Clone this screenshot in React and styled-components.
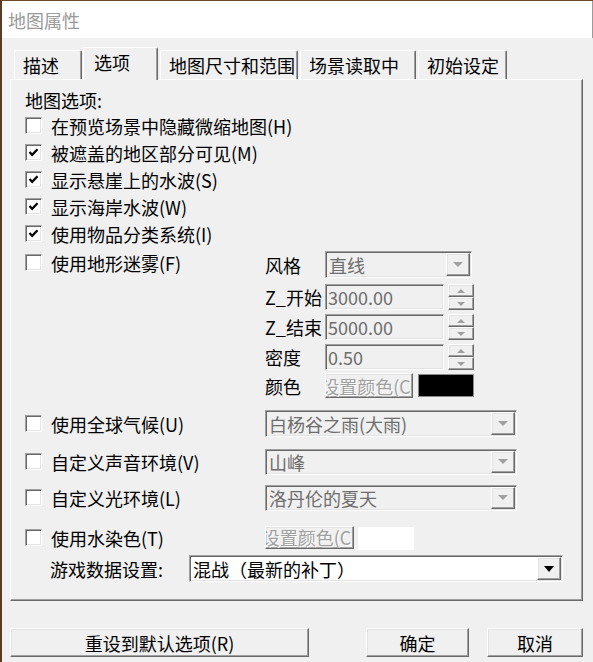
import React from "react";
import styled, { createGlobalStyle, css } from "styled-components";

const GlobalStyle = createGlobalStyle`
  html, body {
    margin: 0;
    padding: 0;
    background: #f0f0f0;
  }
  body {
    font-family: "Noto Sans CJK SC", "Noto Sans", sans-serif;
  }
  * {
    box-sizing: border-box;
  }
`;

const raised = css`
  border: 1px solid;
  border-color: #fff #696969 #696969 #fff;
  box-shadow: inset -1px -1px #a0a0a0, inset 1px 1px #e3e3e3;
`;

const sunken = css`
  border: 1px solid;
  border-color: #a0a0a0 #fff #fff #a0a0a0;
  box-shadow: inset 1px 1px #696969, inset -1px -1px #e3e3e3;
`;

const Screen = styled.div`
  width: 593px;
  height: 662px;
  overflow: hidden;
  border-left: 2px solid #5b3b22;
  border-top: 1px solid #6a4a2a;
  display: flex;
  flex-direction: column;
  font-size: 18px;
  color: #000;
`;

const TitleBar = styled.div`
  height: 37px;
  flex: none;
  background: #fff;
  border-right: 1px solid #9b9b9b;
  display: flex;
  align-items: center;
  padding-left: 6px;
  color: #9a9a9a;
  font-size: 18px;
`;

const Body = styled.div`
  flex: 1;
  background: #f0f0f0;
  padding: 9px 10px 0 8px;
  display: flex;
  flex-direction: column;
`;

const TabStrip = styled.div`
  display: flex;
  align-items: flex-end;
  height: 32px;
  margin-left: 4px;
`;

const Tab = styled.div`
  width: ${(p) => p.$w}px;
  height: ${(p) => (p.$active ? 33 : 29)}px;
  margin-right: ${(p) => p.$gap}px;
  margin-bottom: ${(p) => (p.$active ? -1 : 0)}px;
  padding: 3px 0 0 ${(p) => (p.$active ? 10 : 8)}px;
  background: #f0f0f0;
  border-top: 1px solid #fff;
  border-left: 1px solid #fff;
  border-right: 1px solid #696969;
  box-shadow: inset -1px 0 #a0a0a0;
  border-radius: 2px 2px 0 0;
  line-height: 22px;
  white-space: nowrap;
  position: relative;
  z-index: ${(p) => (p.$active ? 2 : 0)};
`;

const Panel = styled.div`
  width: 573px;
  height: 522px;
  flex: none;
  border-top: 1px solid #fff;
  border-left: 1px solid #fff;
  border-right: 1px solid #696969;
  border-bottom: 1px solid #696969;
  box-shadow: inset -1px -1px #a0a0a0;
  padding: 9px 0 0 14px;
  position: relative;
  z-index: 1;
`;

const SectionTitle = styled.div`
  height: 23px;
  line-height: 23px;
`;

const CheckRow = styled.div`
  display: flex;
  align-items: center;
  height: ${(p) => p.$h || 27}px;
  white-space: nowrap;
`;

const Box = styled.span`
  width: 17px;
  height: 17px;
  flex: none;
  margin-right: 9px;
  background: #fff;
  ${sunken};
  display: flex;
  align-items: center;
  justify-content: center;
`;

const FogBlock = styled.div`
  display: grid;
  grid-template-columns: 240px auto;
  align-items: start;
  margin-top: 4px;
`;

const FogGrid = styled.div`
  display: grid;
  grid-template-columns: 60px auto;
  grid-template-rows: 33px 30px 30px 29px 25px;
  align-items: start;
`;

const FogLabel = styled.div`
  height: ${(p) => p.$h}px;
  display: flex;
  align-items: center;
  white-space: nowrap;
`;

const SelectBox = styled.div`
  width: ${(p) => p.$w}px;
  height: ${(p) => p.$h}px;
  ${sunken};
  padding: 1px;
  display: flex;
  background: ${(p) => (p.$off ? "#f0f0f0" : "#fff")};
`;

const SelectText = styled.div`
  flex: 1;
  display: flex;
  align-items: center;
  padding-left: 2px;
  line-height: 20px;
  color: ${(p) => (p.$off ? "#6d6d6d" : "#000")};
  white-space: nowrap;
`;

const ArrowBtn = styled.div`
  width: 24px;
  flex: none;
  background: #f0f0f0;
  ${raised};
  display: flex;
  align-items: center;
  justify-content: center;
`;

const Tri = styled.span`
  width: 0;
  height: 0;
  border-left: ${(p) => (p.$small ? 4 : 5)}px solid transparent;
  border-right: ${(p) => (p.$small ? 4 : 5)}px solid transparent;
  ${(p) =>
    p.$up
      ? css`
          border-bottom: 4px solid #a0a0a0;
        `
      : css`
          border-top: ${p.$small ? 4 : p.$off ? 5 : 6}px solid ${p.$off ? "#a0a0a0" : "#000"};
        `}
`;

const SpinWrap = styled.div`
  display: flex;
  gap: 4px;
  height: 26px;
`;

const Field = styled.div`
  width: 119px;
  height: 26px;
  ${sunken};
  background: #f0f0f0;
  color: #6d6d6d;
  display: flex;
  align-items: center;
  padding-left: 2px;
  line-height: 20px;
`;

const Spinner = styled.div`
  width: 26px;
  display: flex;
  flex-direction: column;
`;

const SpinBtn = styled.div`
  flex: 1;
  ${raised};
  background: #f0f0f0;
  display: flex;
  align-items: center;
  justify-content: center;
`;

const ColorWrap = styled.div`
  display: flex;
  gap: ${(p) => p.$gap}px;
`;

const ColorBtn = styled.div`
  width: ${(p) => p.$w}px;
  height: ${(p) => p.$h}px;
  ${raised};
  background: #f0f0f0;
  overflow: hidden;
  display: flex;
  align-items: center;
  justify-content: center;
  white-space: nowrap;
  line-height: 20px;
  color: #a0a0a0;
  text-shadow: 1px 1px #fff;
`;

const Swatch = styled.div`
  width: 56px;
  height: 23px;
  margin-top: 1px;
  background: ${(p) => p.$c};
  border: ${(p) => (p.$c === "#000" ? "1px solid #8a8a8a" : "none")};
`;

const OptionRow = styled.div`
  display: grid;
  grid-template-columns: 240px auto;
  align-items: center;
  height: ${(p) => p.$h}px;
  margin-top: ${(p) => p.$mt}px;
`;

const GameRow = styled.div`
  display: flex;
  align-items: center;
  height: 27px;
  margin-top: 8px;
  padding-left: 25px;
`;

const GameLabel = styled.div`
  width: 139px;
  white-space: nowrap;
`;

const ButtonRow = styled.div`
  display: flex;
  margin-top: 27px;
`;

const Button = styled.div`
  width: ${(p) => p.$w}px;
  margin-left: ${(p) => p.$ml || 0}px;
  height: 29px;
  ${raised};
  background: #f0f0f0;
  display: flex;
  align-items: center;
  justify-content: center;
  white-space: nowrap;
`;

const Check = ({ on, label, h }) => (
  <CheckRow $h={h}>
    <Box>
      {on && (
        <svg width="13" height="13" viewBox="0 0 13 13">
          <polyline points="2.5,6 5.2,8.8 10.5,3.2" fill="none" stroke="#000" strokeWidth="2.2" />
        </svg>
      )}
    </Box>
    {label}
  </CheckRow>
);

const Select = ({ w, h, value, off }) => (
  <SelectBox $w={w} $h={h} $off={off}>
    <SelectText $off={off}>{value}</SelectText>
    <ArrowBtn>
      <Tri $off={off} />
    </ArrowBtn>
  </SelectBox>
);

const Spin = ({ value }) => (
  <SpinWrap>
    <Field>{value}</Field>
    <Spinner>
      <SpinBtn>
        <Tri $up $small />
      </SpinBtn>
      <SpinBtn>
        <Tri $off $small />
      </SpinBtn>
    </Spinner>
  </SpinWrap>
);

const ColorPick = ({ w, h, gap, color }) => (
  <ColorWrap $gap={gap}>
    <ColorBtn $w={w} $h={h}>设置颜色(C)</ColorBtn>
    <Swatch $c={color} />
  </ColorWrap>
);

const tabs = [
  { label: "描述", w: 68, gap: 1 },
  { label: "选项", w: 75, gap: 2, active: true },
  { label: "地图尺寸和范围", w: 138, gap: 2 },
  { label: "场景读取中", w: 116, gap: 2 },
  { label: "初始设定", w: 89, gap: 0 },
];

const topChecks = [
  { label: "在预览场景中隐藏微缩地图(H)", on: false },
  { label: "被遮盖的地区部分可见(M)", on: true },
  { label: "显示悬崖上的水波(S)", on: true },
  { label: "显示海岸水波(W)", on: true },
  { label: "使用物品分类系统(I)", on: true },
];

export default function App() {
  return (
    <>
      <GlobalStyle />
      <Screen>
        <TitleBar>地图属性</TitleBar>
        <Body>
          <TabStrip>
            {tabs.map((t) => (
              <Tab key={t.label} $w={t.w} $gap={t.gap} $active={t.active}>
                {t.label}
              </Tab>
            ))}
          </TabStrip>
          <Panel>
            <SectionTitle>地图选项:</SectionTitle>
            {topChecks.map((c) => (
              <Check key={c.label} on={c.on} label={c.label} />
            ))}

            <FogBlock>
              <Check h={23} label="使用地形迷雾(F)" />
              <FogGrid>
                <FogLabel $h={27}>风格</FogLabel>
                <Select w={147} h={27} value="直线" off />
                <FogLabel $h={26}>Z_开始</FogLabel>
                <Spin value="3000.00" />
                <FogLabel $h={26}>Z_结束</FogLabel>
                <Spin value="5000.00" />
                <FogLabel $h={26}>密度</FogLabel>
                <Spin value="0.50" />
                <FogLabel $h={25}>颜色</FogLabel>
                <ColorPick w={88} h={25} gap={5} color="#000" />
              </FogGrid>
            </FogBlock>

            <OptionRow $h={27} $mt={12}>
              <Check label="使用全球气候(U)" />
              <Select w={252} h={27} value="白杨谷之雨(大雨)" off />
            </OptionRow>
            <OptionRow $h={26} $mt={11}>
              <Check label="自定义声音环境(V)" />
              <Select w={252} h={26} value="山峰" off />
            </OptionRow>
            <OptionRow $h={26} $mt={10}>
              <Check label="自定义光环境(L)" />
              <Select w={252} h={26} value="洛丹伦的夏天" off />
            </OptionRow>
            <OptionRow $h={23} $mt={14}>
              <Check label="使用水染色(T)" />
              <ColorPick w={89} h={23} gap={4} color="#fff" />
            </OptionRow>
            <GameRow>
              <GameLabel>游戏数据设置:</GameLabel>
              <Select w={374} h={27} value="混战（最新的补丁）" />
            </GameRow>
          </Panel>
          <ButtonRow>
            <Button $w={299}>重设到默认选项(R)</Button>
            <Button $w={103} $ml={57}>确定</Button>
            <Button $w={96} $ml={18}>取消</Button>
          </ButtonRow>
        </Body>
      </Screen>
    </>
  );
}
